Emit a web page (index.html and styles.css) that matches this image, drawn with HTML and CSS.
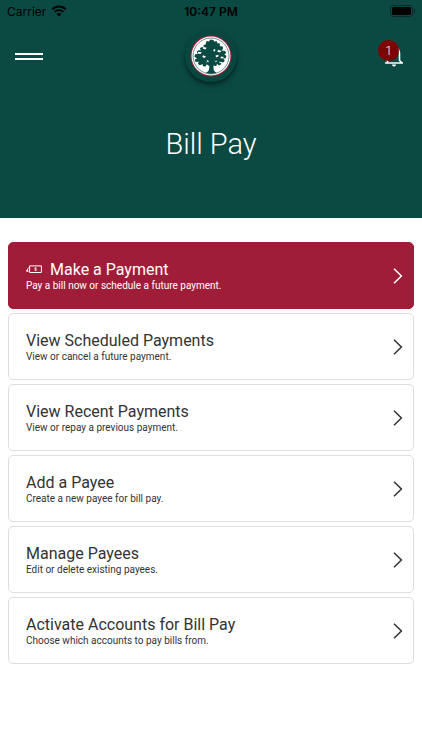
FILE: index.html
```html
<!DOCTYPE html>
<html lang="en">
<head>
    <meta charset="UTF-8">
    <meta name="viewport" content="width=device-width, initial-scale=1.0">
    <title>Bill Pay</title>
    <link rel="stylesheet" href="styles.css">
</head>
<body>

    <header class="header">
        <div class="status-bar">
            <div class="carrier">
                <span>Carrier</span>
                <svg width="16" height="12" viewBox="0 0 16 12" aria-hidden="true">
                    <path d="M1.2 4.3a9.6 9.6 0 0 1 13.6 0" fill="none" stroke="#000" stroke-width="2"/>
                    <path d="M3.7 6.9a6.1 6.1 0 0 1 8.6 0" fill="none" stroke="#000" stroke-width="1.9"/>
                    <path d="M8 11.6 5.6 9.1a3.4 3.4 0 0 1 4.8 0z"/>
                </svg>
            </div>
            <div class="clock">10:47 PM</div>
            <div class="battery">
                <svg width="25" height="12" viewBox="0 0 25 12" aria-hidden="true">
                    <rect x=".5" y=".5" width="22" height="11" rx="3" fill="none" stroke="#000" stroke-opacity=".4"/>
                    <rect x="2" y="2" width="19" height="8" rx="1.5"/>
                    <path d="M23.800 4v4a2.200 2.200 0 0 0 0-4z" fill-opacity=".45"/>
                </svg>
            </div>
        </div>

        <nav class="top-nav">
            <button class="menu-btn" type="button" aria-label="Menu">
                <span></span>
                <span></span>
            </button>
            <a class="logo" href="#" aria-label="Home">
                <svg width="42" height="42" viewBox="0 0 42 42" aria-hidden="true">
                    <circle cx="21" cy="21" r="20.500" fill="#a51c3a"/>
                    <circle cx="21" cy="21" r="19.500" fill="#fff"/>
                    <circle cx="21" cy="21" r="18" fill="none" stroke="#0b4a43" stroke-width=".6"/>
                    <g fill="#0b4a43">
                        <path d="M19.300 24h4l.2 9.500c.1 2 1 3.300 3.200 4.300-3.600 1.200-7.300 1.200-10.900 0 2.300-1 3.300-2.300 3.400-4.300z"/>
                        <path d="M16.500 6l2.300.6L20.500 4.600l2.800.5.900 1.400 2.600-.3.600 2 2.600.4-.3 2.300 3 .6.300 2.600-1.600 1.300 3.600.5 1.300 2.200-2 1.200 2.200 1.800-.9 2.400-2.500-.3 1.700 2.200-1.500 2.200-2.400-.9.400 2.600-2.400 1.200-1.800-1.700-.8 2.200-2.600-.3-2.400-2-2.800 2-1.700-1.400-1.300 2.200-2.600-.2-.3-2.300-2.600 1.300-2.100-1.300.8-2.200-3.200.2-.6-2.400 2.200-1.200-2.600-1.600.5-2.600 2.700-.2-1-2.300 1.900-1.600 2 .6-.6-2.600 2.200-1.200 1.600.8-.3-2.600 2.100-.6z"/>
                    </g>
                    <g fill="#fff">
                        <path d="M13.500 12l3.200.8-1.300 1.800-2.400-.8zM8 16.800l3.700.5-1.200 1.600-2.600-.3zM28 14.800l3.300 1.100-1.300 1.500-2.600-.7zM24 14l1.600.8-1.200 2-1.200-1zM13 20.300l3 1.300-1.600 1.300-2.100-.9zM25.500 20.500l2.700-.8.5 1.600-2.600 1.200zM31 21.500l3 .6-1.400 1.500-2.200-.4zM15.600 26.300l2.600-1.200.4 2.200-2.200 1zM24.300 25.200l2.800.2-.8 1.900-1.900-.4zM29 26.500l2.300.8-1.300 1.200z"/>
                    </g>
                    <path d="M21.400 32V18M21.400 31l-7-6M21.500 29l7.500-6.500M21.400 22l-4-5" fill="none" stroke="#0b4a43" stroke-width="1.400"/>
                </svg>
            </a>
            <button class="bell-btn" type="button" aria-label="Notifications, 1 new">
                <svg width="20" height="24" viewBox="0 0 20 24" aria-hidden="true">
                    <path d="M1 19h18M3.500 19V9a6 6 0 0 1 12 0v7.500l2.700 2.500" fill="none" stroke="#fff" stroke-width="1.600"/>
                    <path d="M8 20.500h4a2 2 0 0 1-4 0z" fill="#fff"/>
                </svg>
                <span class="badge">1</span>
            </button>
        </nav>

        <h1 class="page-title">Bill Pay</h1>
    </header>

    <main class="options">
        <a class="option active" href="#">
            <span class="option-text">
                <span class="option-title">
                    <svg width="16" height="9" viewBox="0 0 16 9" aria-hidden="true">
                        <path d="M3.600.9h11.800v6.600H3.600z" fill="none" stroke="currentColor" stroke-width="1"/>
                        <path d="M2.600 2.600.3 6.300h2.300M1.600 4.400v1.800" fill="none" stroke="currentColor" stroke-width=".9"/>
                        <path d="M10.700 3.200c-.3-.5-2.200-.6-2.200.3 0 .8 2.200.4 2.200 1.300 0 .9-2 .8-2.300.2M9.600 2.200v4" fill="none" stroke="currentColor" stroke-width=".6"/>
                    </svg>
                    Make a Payment
                </span>
                <span class="option-desc">Pay a bill now or schedule a future payment.</span>
            </span>
            <svg class="chevron" width="10" height="16" viewBox="0 0 10 16" aria-hidden="true"><path d="M1 .8 8.400 8 1 15.200"/></svg>
        </a>
        <a class="option" href="#">
            <span class="option-text">
                <span class="option-title">View Scheduled Payments</span>
                <span class="option-desc">View or cancel a future payment.</span>
            </span>
            <svg class="chevron" width="10" height="16" viewBox="0 0 10 16" aria-hidden="true"><path d="M1 .8 8.400 8 1 15.200"/></svg>
        </a>
        <a class="option" href="#">
            <span class="option-text">
                <span class="option-title">View Recent Payments</span>
                <span class="option-desc">View or repay a previous payment.</span>
            </span>
            <svg class="chevron" width="10" height="16" viewBox="0 0 10 16" aria-hidden="true"><path d="M1 .8 8.400 8 1 15.200"/></svg>
        </a>
        <a class="option" href="#">
            <span class="option-text">
                <span class="option-title">Add a Payee</span>
                <span class="option-desc">Create a new payee for bill pay.</span>
            </span>
            <svg class="chevron" width="10" height="16" viewBox="0 0 10 16" aria-hidden="true"><path d="M1 .8 8.400 8 1 15.200"/></svg>
        </a>
        <a class="option" href="#">
            <span class="option-text">
                <span class="option-title">Manage Payees</span>
                <span class="option-desc">Edit or delete existing payees.</span>
            </span>
            <svg class="chevron" width="10" height="16" viewBox="0 0 10 16" aria-hidden="true"><path d="M1 .8 8.400 8 1 15.200"/></svg>
        </a>
        <a class="option" href="#">
            <span class="option-text">
                <span class="option-title">Activate Accounts for Bill Pay</span>
                <span class="option-desc">Choose which accounts to pay bills from.</span>
            </span>
            <svg class="chevron" width="10" height="16" viewBox="0 0 10 16" aria-hidden="true"><path d="M1 .8 8.400 8 1 15.200"/></svg>
        </a>
    </main>

</body>
</html>
```
FILE: styles.css
```css
:root{
    --green: #0a4a43;
    --red: #9f1d39;
    --badge: #7d0304;
    --text: #333;
    --line: #dedede;
}
*{
    box-sizing: border-box;
}
body{
    margin: 0;
    background: #fff;
    color: var(--text);
    font-family: Roboto, sans-serif;
}
button{
    border: 0;
    padding: 0;
    background: none;
    font: inherit;
    cursor: pointer;
}
svg{
    display: block;
}

/* HEADER */
.header{
    background: var(--green);
    padding-bottom: 56px;
}
.status-bar{
    display: grid;
    grid-template-columns: 1fr auto 1fr;
    align-items: center;
    height: 22px;
    padding: 0 7px;
    color: #000;
    font-family: Inter, sans-serif;
    font-size: 12px;
}
.carrier{
    display: flex;
    align-items: center;
    gap: 5px;
}
.clock{
    font-weight: 600;
}
.battery{
    justify-self: end;
}
.top-nav{
    display: grid;
    grid-template-columns: 1fr auto 1fr;
    align-items: center;
    height: 68px;
    padding: 0 15px;
}
.menu-btn{
    display: flex;
    flex-direction: column;
    gap: 3px;
    width: 28px;
}
.menu-btn span{
    height: 2px;
    background: #fff;
}
.logo{
    display: flex;
    justify-content: center;
    align-items: center;
    width: 52px;
    height: 52px;
    border-radius: 50%;
    background: #084740;
    box-shadow: 0 3px 5px rgba(0, 0, 0, 0.5);
}
.bell-btn{
    position: relative;
    justify-self: end;
    margin-right: 3px;
}
.badge{
    position: absolute;
    top: -4px;
    left: -6px;
    width: 21px;
    height: 21px;
    border-radius: 50%;
    background: var(--badge);
    color: #fff;
    font-size: 13px;
    font-weight: 300;
    line-height: 21px;
    text-align: center;
}
.page-title{
    margin: 36px 0 0;
    color: #fff;
    font-size: 29px;
    font-weight: 300;
    line-height: 36px;
    text-align: center;
}

/* OPTIONS */
.options{
    display: flex;
    flex-direction: column;
    gap: 4px;
    padding: 24px 8px;
}
.option{
    display: flex;
    justify-content: space-between;
    align-items: center;
    min-height: 67px;
    padding: 0 10px 0 17px;
    border: 1px solid var(--line);
    border-radius: 5px;
    color: var(--text);
    text-decoration: none;
}
.option.active{
    background: var(--red);
    border-color: var(--red);
    color: #fff;
}
.option-text{
    display: flex;
    flex-direction: column;
}
.option-title{
    display: flex;
    align-items: center;
    gap: 8px;
    font-size: 16px;
    line-height: 20px;
}
.option-desc{
    font-size: 10px;
    line-height: 12px;
}
.chevron{
    fill: none;
    stroke: currentColor;
    stroke-width: 1.5;
}
```
